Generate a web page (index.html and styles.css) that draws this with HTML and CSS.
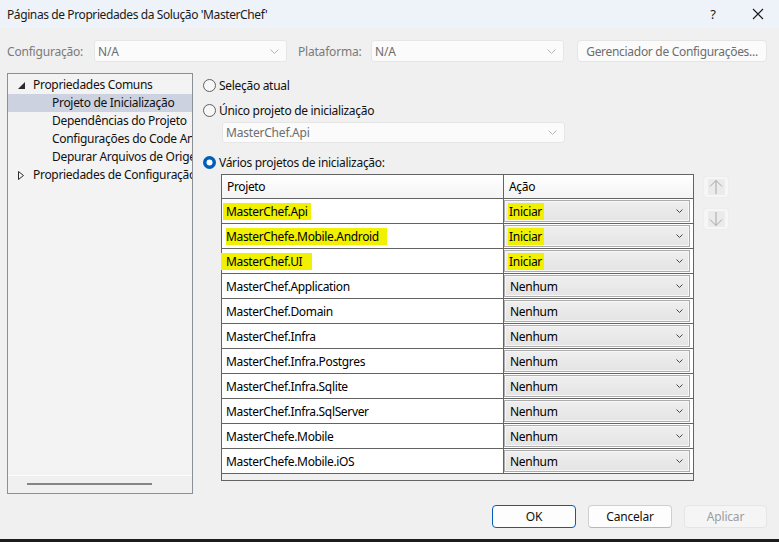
FILE: index.html
```html
<!DOCTYPE html>
<html lang="pt">
<head>
<meta charset="utf-8">
<title>Páginas de Propriedades</title>
<link rel="stylesheet" href="styles.css">
</head>
<body>
<div class="window">
  <div class="titlebar">
    <div class="title">Páginas de Propriedades da Solução 'MasterChef'</div>
    <div class="tb-btn help">?</div>
    <div class="tb-btn close">
      <svg width="12" height="12" viewBox="0 0 12 12"><path d="M1 1L11 11M11 1L1 11" stroke="#1a1a1a" stroke-width="1.1" fill="none"/></svg>
    </div>
  </div>

  <div class="toolbar">
    <span class="lbl lbl-config">Configuração:</span>
    <div class="combo combo-config"><span>N/A</span><svg class="chev" width="9" height="5" viewBox="0 0 9 5"><path d="M0.5 0.5L4.5 4.5L8.5 0.5" stroke="#b5b5b5" fill="none"/></svg></div>
    <span class="lbl lbl-plat">Plataforma:</span>
    <div class="combo combo-plat"><span>N/A</span><svg class="chev" width="9" height="5" viewBox="0 0 9 5"><path d="M0.5 0.5L4.5 4.5L8.5 0.5" stroke="#b5b5b5" fill="none"/></svg></div>
    <div class="btn-manager">Gerenciador de Configurações...</div>
  </div>

  <div class="main">
    <div class="tree">
      <div class="tree-items">
        <div class="node lvl1"><svg class="tri" width="7" height="7" viewBox="0 0 7 7"><path d="M7 0V7H0Z" fill="#2b2b2b"/></svg>Propriedades Comuns</div>
        <div class="node lvl2 selected">Projeto de Inicialização</div>
        <div class="node lvl2">Dependências do Projeto</div>
        <div class="node lvl2">Configurações do Code Analysis</div>
        <div class="node lvl2">Depurar Arquivos de Origem</div>
        <div class="node lvl1"><svg class="tri tri-c" width="6" height="9" viewBox="0 0 6 9"><path d="M0.5 0.5L5.5 4.5L0.5 8.5Z" stroke="#2b2b2b" fill="none" stroke-width="1"/></svg>Propriedades de Configuração</div>
      </div>
      <div class="hscroll"><div class="thumb"></div></div>
    </div>

    <div class="content">
      <div class="radio-row r1"><svg class="radio" width="13" height="13" viewBox="0 0 13 13"><circle cx="6.5" cy="6.5" r="6" fill="#f7f7f7" stroke="#5f5f5f"/></svg><span>Seleção atual</span></div>
      <div class="radio-row r2"><svg class="radio" width="13" height="13" viewBox="0 0 13 13"><circle cx="6.5" cy="6.5" r="6" fill="#f7f7f7" stroke="#5f5f5f"/></svg><span>Único projeto de inicialização</span></div>
      <div class="combo combo-single"><span>MasterChef.Api</span><svg class="chev" width="9" height="5" viewBox="0 0 9 5"><path d="M0.5 0.5L4.5 4.5L8.5 0.5" stroke="#b5b5b5" fill="none"/></svg></div>
      <div class="radio-row r3"><svg class="radio" width="13" height="13" viewBox="0 0 13 13"><circle cx="6.5" cy="6.5" r="6.5" fill="#005fb8"/><circle cx="6.5" cy="6.5" r="3" fill="#ffffff"/></svg><span>Vários projetos de inicialização:</span></div>

      <div class="grid-area">
        <div class="grid">
          <div class="row head">
            <div class="c1">Projeto</div>
            <div class="c2">Ação</div>
          </div>
          <div class="row"><div class="c1"><span class="hl hl-api">MasterChef.Api</span></div><div class="c2"><div class="dd"><span class="hl hl-ini">Iniciar</span><svg class="dchev" width="7" height="4" viewBox="0 0 7 4"><path d="M0.5 0.5L3.5 3.5L6.5 0.5" stroke="#444" fill="none"/></svg></div></div></div>
          <div class="row"><div class="c1"><span class="hl hl-and">MasterChefe.Mobile.Android</span></div><div class="c2"><div class="dd"><span class="hl hl-ini">Iniciar</span><svg class="dchev" width="7" height="4" viewBox="0 0 7 4"><path d="M0.5 0.5L3.5 3.5L6.5 0.5" stroke="#444" fill="none"/></svg></div></div></div>
          <div class="row"><div class="c1"><span class="hl hl-ui">MasterChef.UI</span></div><div class="c2"><div class="dd"><span class="hl hl-ini">Iniciar</span><svg class="dchev" width="7" height="4" viewBox="0 0 7 4"><path d="M0.5 0.5L3.5 3.5L6.5 0.5" stroke="#444" fill="none"/></svg></div></div></div>
          <div class="row"><div class="c1">MasterChef.Application</div><div class="c2"><div class="dd"><span>Nenhum</span><svg class="dchev" width="7" height="4" viewBox="0 0 7 4"><path d="M0.5 0.5L3.5 3.5L6.5 0.5" stroke="#444" fill="none"/></svg></div></div></div>
          <div class="row"><div class="c1">MasterChef.Domain</div><div class="c2"><div class="dd"><span>Nenhum</span><svg class="dchev" width="7" height="4" viewBox="0 0 7 4"><path d="M0.5 0.5L3.5 3.5L6.5 0.5" stroke="#444" fill="none"/></svg></div></div></div>
          <div class="row"><div class="c1">MasterChef.Infra</div><div class="c2"><div class="dd"><span>Nenhum</span><svg class="dchev" width="7" height="4" viewBox="0 0 7 4"><path d="M0.5 0.5L3.5 3.5L6.5 0.5" stroke="#444" fill="none"/></svg></div></div></div>
          <div class="row"><div class="c1">MasterChef.Infra.Postgres</div><div class="c2"><div class="dd"><span>Nenhum</span><svg class="dchev" width="7" height="4" viewBox="0 0 7 4"><path d="M0.5 0.5L3.5 3.5L6.5 0.5" stroke="#444" fill="none"/></svg></div></div></div>
          <div class="row"><div class="c1">MasterChef.Infra.Sqlite</div><div class="c2"><div class="dd"><span>Nenhum</span><svg class="dchev" width="7" height="4" viewBox="0 0 7 4"><path d="M0.5 0.5L3.5 3.5L6.5 0.5" stroke="#444" fill="none"/></svg></div></div></div>
          <div class="row"><div class="c1">MasterChef.Infra.SqlServer</div><div class="c2"><div class="dd"><span>Nenhum</span><svg class="dchev" width="7" height="4" viewBox="0 0 7 4"><path d="M0.5 0.5L3.5 3.5L6.5 0.5" stroke="#444" fill="none"/></svg></div></div></div>
          <div class="row"><div class="c1">MasterChefe.Mobile</div><div class="c2"><div class="dd"><span>Nenhum</span><svg class="dchev" width="7" height="4" viewBox="0 0 7 4"><path d="M0.5 0.5L3.5 3.5L6.5 0.5" stroke="#444" fill="none"/></svg></div></div></div>
          <div class="row"><div class="c1">MasterChefe.Mobile.iOS</div><div class="c2"><div class="dd"><span>Nenhum</span><svg class="dchev" width="7" height="4" viewBox="0 0 7 4"><path d="M0.5 0.5L3.5 3.5L6.5 0.5" stroke="#444" fill="none"/></svg></div></div></div>
        </div>
        <div class="movers">
          <div class="mv"><div class="mv-in"><svg width="16" height="16" viewBox="0 0 16 16"><path d="M8 15V1.5M2 7.5L8 1.5L14 7.5" stroke="#a6a6a6" fill="none" stroke-width="1"/></svg></div></div>
          <div class="mv"><div class="mv-in"><svg width="16" height="16" viewBox="0 0 16 16"><path d="M8 1V14.5M2 8.5L8 14.5L14 8.5" stroke="#a6a6a6" fill="none" stroke-width="1"/></svg></div></div>
        </div>
      </div>
    </div>
  </div>

  <div class="footer">
    <div class="btn btn-ok">OK</div>
    <div class="btn btn-cancel">Cancelar</div>
    <div class="btn btn-apply">Aplicar</div>
  </div>
</div>
</body>
</html>
```

FILE: styles.css
```css
html, body {
  margin: 0;
  padding: 0;
}
body {
  background: #1c1c1c;
  width: 779px;
  height: 542px;
  overflow: hidden;
  font-family: "Noto Sans", "Open Sans", sans-serif;
  font-size: 12px;
  color: #000;
}
.window {
  width: 779px;
  height: 539px;
  background: #f0f0f0;
  display: flex;
  flex-direction: column;
}
.titlebar {
  height: 28px;
  background: #eef3f9;
  display: flex;
  align-items: center;
}
.title {
  flex: 1;
  padding-left: 7px;
  color: #1a1a1a;
  letter-spacing: -0.4px;
}
.tb-btn {
  width: 46px;
  height: 28px;
  display: flex;
  align-items: center;
  justify-content: center;
}
.help {
  font-size: 13px;
  color: #1a1a1a;
  padding-right: 2px;
  box-sizing: border-box;
}
.close {
  width: 42px;
}

.toolbar {
  margin-top: 12px;
  height: 22px;
  display: flex;
  align-items: center;
  padding-left: 7px;
}
.lbl {
  color: #7a7a7a;
  letter-spacing: -0.2px;
}
.lbl-config { width: 87px; }
.lbl-plat { width: 73px; margin-left: 11px; }
.combo {
  height: 22px;
  box-sizing: border-box;
  background: #fbfbfb;
  border: 1px solid #e6e6e6;
  border-radius: 3px;
  display: flex;
  align-items: center;
  padding-left: 3px;
  padding-right: 7px;
  color: #6d6d6d;
  letter-spacing: -0.2px;
}
.combo span { flex: 1; }
.combo-config { width: 193px; }
.combo-plat { width: 193px; }
.btn-manager {
  margin-left: 13px;
  width: 190px;
  height: 22px;
  box-sizing: border-box;
  background: #fbfbfb;
  border: 1px solid #e5e5e5;
  border-radius: 4px;
  display: flex;
  align-items: center;
  justify-content: center;
  color: #6d6d6d;
  letter-spacing: -0.3px;
}

.main {
  margin-top: 11px;
  display: flex;
  padding-left: 7px;
}
.tree {
  width: 186px;
  height: 421px;
  box-sizing: border-box;
  border: 1px solid #8b8f96;
  background: #f3f3f3;
  display: flex;
  flex-direction: column;
}
.tree-items {
  flex: 1;
  padding-top: 2px;
  overflow: hidden;
}
.node {
  height: 18px;
  line-height: 18px;
  white-space: nowrap;
  overflow: hidden;
  letter-spacing: -0.3px;
  color: #111;
  display: flex;
  align-items: center;
}
.lvl1 { padding-left: 10px; }
.lvl1 .tri { width: 7px; flex: 0 0 auto; margin-right: 8px; }
.lvl1 .tri-c { width: 6px; margin-right: 9px; }
.lvl2 { padding-left: 44px; }
.selected { background: #ccd2df; }
.hscroll {
  height: 17px;
  border-top: 1px solid #fbfbfb;
  background: #f0f0f0;
}
.thumb {
  margin-left: 19px;
  margin-top: 7px;
  width: 125px;
  height: 2px;
  background: #858585;
}

.content {
  margin-left: 10px;
  display: flex;
  flex-direction: column;
  padding-top: 3px;
}
.radio-row {
  height: 18px;
  display: flex;
  align-items: center;
  letter-spacing: -0.3px;
  color: #111;
}
.radio { margin-right: 3px; flex: 0 0 auto; }
.r2 { margin-top: 7px; }
.combo-single {
  margin-top: 3px;
  margin-left: 19px;
  width: 343px;
  height: 21px;
}
.r3 { margin-top: 10px; }

.grid-area {
  margin-top: 3px;
  margin-left: 18px;
  display: flex;
  align-items: flex-start;
}
.grid {
  width: 473px;
  height: 307px;
  box-sizing: border-box;
  border: 1px solid #646464;
  background: #f0f0f0;
}
.row {
  display: flex;
  height: 24px;
  border-bottom: 1px solid #646464;
  background: #fff;
}
.row.head {
  height: 23px;
  background: linear-gradient(#ffffff, #f4f4f4);
}
.c1 {
  width: 282px;
  border-right: 1px solid #646464;
  display: flex;
  align-items: center;
  padding-left: 4px;
  box-sizing: border-box;
  letter-spacing: -0.35px;
  white-space: nowrap;
}
.head .c1 { padding-left: 5px; }
.c2 {
  width: 188px;
  box-sizing: border-box;
  padding: 1px 2px 1px 0;
  display: flex;
  letter-spacing: -0.3px;
}
.head .c2 {
  align-items: center;
  padding-left: 5px;
}
.dd {
  flex: 1;
  box-sizing: border-box;
  border: 1px solid #acacac;
  box-shadow: inset 0 0 0 1px #f7f7f7;
  background: linear-gradient(#efefef, #e4e4e4);
  display: flex;
  align-items: center;
  padding-left: 5px;
  padding-right: 6px;
}
.dd span { flex: 1; }
.dd span.hl { flex: 0 0 auto; margin-right: auto; }
.dchev { flex: 0 0 auto; }
.hl {
  background: #f0f000;
}
.hl-api { padding-right: 3px; margin-left: -3px; padding-left: 3px; }
.hl-and { padding-right: 8px; }
.hl-ui { padding-right: 10px; margin-left: -5px; padding-left: 5px; }
.hl-ini { padding: 0 2px 0 1px; margin-left: -2px; }

.movers {
  margin-left: 9px;
  margin-top: 2px;
  display: flex;
  flex-direction: column;
  gap: 10px;
}
.mv {
  width: 26px;
  height: 22px;
  box-sizing: border-box;
  border: 1px solid #ededed;
  border-radius: 4px;
  background: #f6f6f6;
  display: flex;
  align-items: center;
  justify-content: center;
}
.mv-in {
  width: 17px;
  height: 16px;
  background: #ebebeb;
  display: flex;
  align-items: center;
  justify-content: center;
}

.footer {
  margin-top: 11px;
  display: flex;
  justify-content: flex-end;
  padding-right: 12px;
  gap: 12px;
}
.btn {
  width: 84px;
  height: 23px;
  box-sizing: border-box;
  border-radius: 4px;
  display: flex;
  align-items: center;
  justify-content: center;
  letter-spacing: -0.2px;
}
.btn-ok {
  background: #fdfdfd;
  border: 1px solid #005fb8;
  color: #111;
}
.btn-cancel {
  background: #fdfdfd;
  border: 1px solid #d0d0d0;
  border-bottom-color: #b8b8b8;
  color: #111;
}
.btn-apply {
  width: 83px;
  background: #f5f5f5;
  border: 1px solid #e5e5e5;
  color: #9d9d9d;
}
```
